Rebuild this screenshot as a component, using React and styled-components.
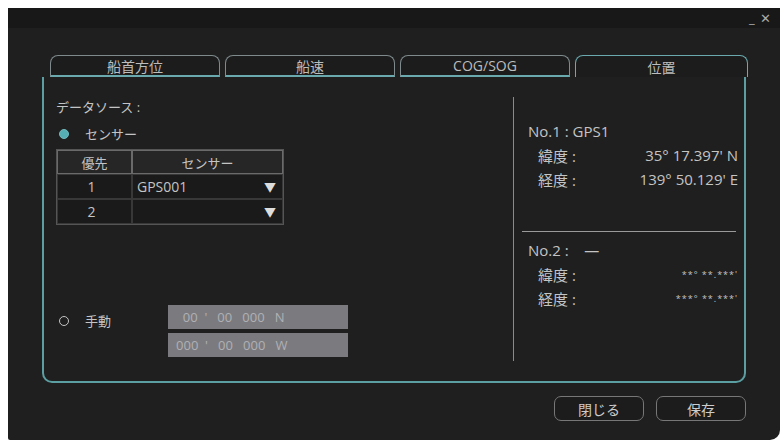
import React from 'react';
import styled, { createGlobalStyle } from 'styled-components';

const Global = createGlobalStyle`
  *, *::before, *::after { box-sizing: border-box; }
  body { margin: 0; background: #fff; font-family: "Open Sans", "Noto Sans CJK JP", sans-serif; }
`;

const Window = styled.div`
  margin: 8px 4px 0 8px;
  height: 432px;
  background: #1f1f1f;
  border-radius: 2px 8px 10px 2px;
  display: flex;
  flex-direction: column;
  color: #c4c4c4;
`;

const TitleBar = styled.div`
  height: 20px;
  background: #181818;
  display: flex;
  justify-content: flex-end;
  align-items: center;
  padding-right: 8px;
  font-size: 13px;
  color: #aaa;
  letter-spacing: 1px;
`;

const Body = styled.div`
  padding: 27px 34px 0 34px;
  display: flex;
  flex-direction: column;
`;

const Tabs = styled.div`
  display: flex;
  gap: 5px;
  height: 22px;
  padding-left: 8px;
`;

const Tab = styled.div`
  flex: ${p => (p.$active ? '0 0 173px' : '0 0 170px')};
  border: 1px solid ${p => (p.$active ? '#6aa9ad' : '#7e8a8c')};
  border-bottom: ${p => (p.$active ? 'none' : '2px solid #6aa9ad')};
  border-radius: 8px 8px 0 0;
  display: flex;
  justify-content: center;
  align-items: center;
  font-size: 14px;
  color: #bdbdbd;
  background: #1c1c1c;
`;

const Panel = styled.div`
  height: 306px;
  border: 2px solid #5c9fa2;
  border-top: none;
  border-radius: 0 0 10px 10px;
  display: flex;
  padding: 20px 0 20px 12px;
`;

const Left = styled.div`
  width: 458px;
  border-right: 1px solid #8a8a8a;
  display: flex;
  flex-direction: column;
  font-size: 13px;
`;

const Label = styled.div`
  margin-bottom: 8px;
`;

const RadioRow = styled.div`
  display: flex;
  align-items: center;
  gap: 16px;
  margin-left: 3px;
`;

const Radio = styled.span`
  width: 10px;
  height: 10px;
  border-radius: 50%;
  border: 1.5px solid ${p => (p.$on ? '#6fb8bd' : '#c4c4c4')};
  background: ${p => (p.$on ? '#55aeb3' : 'transparent')};
`;

const Table = styled.div`
  margin-top: 6px;
  width: 228px;
  border: 1px solid #555;
  display: grid;
  grid-template-columns: 75px 1fr;
`;

const Head = styled.div`
  height: 24px;
  display: flex;
  align-items: center;
  justify-content: center;
  background: #262626;
  border: 1px solid #6a6a6a;
`;

const Cell = styled.div`
  height: 25px;
  display: flex;
  align-items: center;
  justify-content: ${p => (p.$center ? 'center' : 'space-between')};
  padding: 0 6px 0 ${p => (p.$center ? '0' : '4px')};
  background: #1a1a1a;
  border: 1px solid #383838;
  font-size: 14px;
`;

const Arrow = styled.span`
  font-size: 12px;
  color: #ddd;
`;

const Manual = styled.div`
  margin-top: 80px;
  display: flex;
  align-items: flex-start;
  gap: 60px;
`;

const ManualLabel = styled(RadioRow)`
  margin-top: 6px;
`;

const Inputs = styled.div`
  display: flex;
  flex-direction: column;
  gap: 4px;
  margin-left: -3px;
`;

const Input = styled.div`
  width: 180px;
  height: 24px;
  background: #7b7b7f;
  color: #b0b0b4;
  font-size: 13px;
  display: flex;
  align-items: center;
  padding-left: 8px;
  white-space: pre;
`;

const Right = styled.div`
  flex: 1;
  padding: 22px 0 0 14px;
  display: flex;
  flex-direction: column;
  font-size: 15px;
`;

const Line = styled.div`
  display: flex;
  justify-content: space-between;
  height: 24px;
  align-items: center;
  padding-left: ${p => (p.$indent ? '10px' : '0')};
  padding-right: 6px;
`;

const Small = styled.span`
  font-size: 9px;
  letter-spacing: 1px;
`;

const Sep = styled.div`
  height: 1px;
  background: #9a9a9a;
  margin: 40px 0 6px -6px;
  width: 214px;
`;

const Footer = styled.div`
  display: flex;
  justify-content: flex-end;
  gap: 12px;
  margin-top: 13px;
`;

const Button = styled.div`
  width: 90px;
  height: 25px;
  border: 1px solid #777;
  border-radius: 7px;
  display: flex;
  align-items: center;
  justify-content: center;
  font-size: 14px;
  color: #ccc;
  background: #1c1c1c;
`;

export default function App() {
  return (
    <>
      <Global />
      <Window>
        <TitleBar>_ ✕</TitleBar>
        <Body>
          <Tabs>
            <Tab>船首方位</Tab>
            <Tab>船速</Tab>
            <Tab>COG/SOG</Tab>
            <Tab $active>位置</Tab>
          </Tabs>
          <Panel>
            <Left>
              <Label>データソース :</Label>
              <RadioRow><Radio $on /> センサー</RadioRow>
              <Table>
                <Head>優先</Head>
                <Head>センサー</Head>
                <Cell $center>1</Cell>
                <Cell>GPS001<Arrow>▼</Arrow></Cell>
                <Cell $center>2</Cell>
                <Cell><span /><Arrow>▼</Arrow></Cell>
              </Table>
              <Manual>
                <ManualLabel><Radio /> 手動</ManualLabel>
                <Inputs>
                  <Input>{'  00  \'   00   000   N'}</Input>
                  <Input>{'000  \'   00   000   W'}</Input>
                </Inputs>
              </Manual>
            </Left>
            <Right>
              <Line>No.1 : GPS1</Line>
              <Line $indent><span>緯度 :</span><span>35° 17.397' N</span></Line>
              <Line $indent><span>経度 :</span><span>139° 50.129' E</span></Line>
              <Sep />
              <Line>No.2 :&nbsp;&nbsp;&nbsp;&nbsp;—</Line>
              <Line $indent><span>緯度 :</span><Small>**° **.***'</Small></Line>
              <Line $indent><span>経度 :</span><Small>***° **.***'</Small></Line>
            </Right>
          </Panel>
          <Footer>
            <Button>閉じる</Button>
            <Button>保存</Button>
          </Footer>
        </Body>
      </Window>
    </>
  );
}
